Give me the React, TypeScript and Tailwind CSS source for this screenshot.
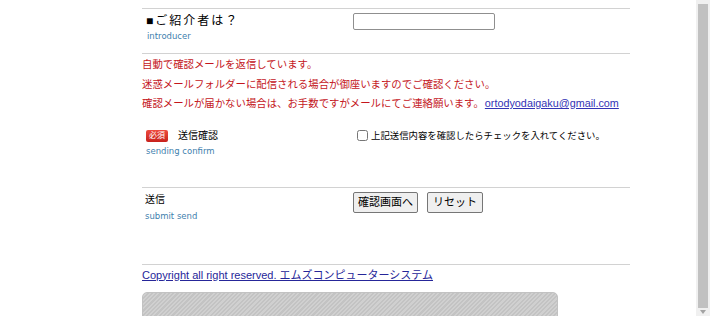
import React from 'react';

const jp = "font-['Liberation_Sans','Noto_Sans_CJK_JP',sans-serif]";
const sub = "font-['DejaVu_Sans',sans-serif] text-[8.5px] text-[#3f7fae] leading-none";

const Rule: React.FC = () => <div className="h-px w-full bg-[#d2d2d2]" />;

const App: React.FC = () => {
    return (
        <div className={`flex h-[316px] w-[710px] overflow-hidden bg-white text-black ${jp}`}>
            {/* ページ本体 */}
            <div className="flex-1 pt-[8px] pl-[142px]">
                <div className="w-[488px]">
                    <Rule />

                    {/* 紹介者 */}
                    <div className="flex h-[44px]">
                        <div className="w-[211px] pl-[4px] pt-[3px]">
                            <div className="text-[12px] leading-[18px] tracking-[2px]">■ご紹介者は？</div>
                            <div className={`${sub} mt-[2px] pl-[1px]`}>introducer</div>
                        </div>
                        <div className="pt-[4px]">
                            <input
                                type="text"
                                className="block h-[17px] w-[142px] rounded-[2px] border border-[#8f8f8f] bg-white"
                            />
                        </div>
                    </div>

                    <Rule />

                    {/* 注意書き */}
                    <div className="whitespace-nowrap pt-[1px] text-[10.4px] leading-[19.5px] text-[#c4161c]">
                        <p>自動で確認メールを返信しています。</p>
                        <p>迷惑メールフォルダーに配信される場合が御座いますのでご確認ください。</p>
                        <p>
                            確認メールが届かない場合は、お手数ですがメールにてご連絡願います。
                            <a href="#" className="ml-[1px] text-[10.8px] text-[#3333b5] underline">
                                ortodyodaigaku@gmail.com
                            </a>
                        </p>
                    </div>

                    {/* 送信確認 */}
                    <div className="mt-[15px] flex h-[58px]">
                        <div className="w-[211px] pl-[4px]">
                            <div className="flex items-center">
                                <span className="flex h-[12px] w-[22px] items-center justify-center rounded-[2px] bg-gradient-to-b from-[#ee4a3f] to-[#c7201b] text-[8px] leading-none text-white">
                                    必須
                                </span>
                                <span className="ml-[10px] text-[10px] leading-[14px]">送信確認</span>
                            </div>
                            <div className={`${sub} mt-[4px]`}>sending confirm</div>
                        </div>
                        <label className="flex h-[14px] items-center">
                            <input type="checkbox" className="m-0 ml-[4px] h-[11px] w-[11px]" />
                            <span className="ml-[3px] text-[9.4px] leading-none">
                                上記送信内容を確認したらチェックを入れてください。
                            </span>
                        </label>
                    </div>

                    <Rule />

                    {/* 送信 */}
                    <div className="flex h-[76px]">
                        <div className="w-[211px] pl-[3px] pt-[5px]">
                            <div className="text-[10px] leading-[14px]">送信</div>
                            <div className={`${sub} mt-[5px]`}>submit send</div>
                        </div>
                        <div className="flex gap-[9px] pt-[4px]">
                            <button className="h-[21px] rounded-[2px] border border-[#767676] bg-[#efefef] px-[4px] text-[11px] leading-none">
                                確認画面へ
                            </button>
                            <button className="h-[21px] rounded-[2px] border border-[#767676] bg-[#efefef] px-[5px] text-[11px] leading-none">
                                リセット
                            </button>
                        </div>
                    </div>

                    <Rule />

                    {/* フッター */}
                    <div className="pt-[3px] text-[11px] leading-[14px]">
                        <a href="#" className="text-[#262699] underline">
                            Copyright all right reserved. エムズコンピューターシステム
                        </a>
                    </div>
                    <div className="mt-[10px] h-[30px] w-[416px] rounded-[5px] border border-[#c2c2c2] bg-[repeating-linear-gradient(135deg,#c3c3c3_0px,#c3c3c3_1.5px,#d0d0d0_1.5px,#d0d0d0_3px)]" />
                </div>
            </div>

            {/* スクロールバー */}
            <div className="flex w-[14px] flex-col bg-[#f0f0f0] px-[2px]">
                <div className="mt-[4px] flex-1 bg-[#c1c1c1]" />
                <div className="flex h-[8px] items-center justify-center">
                    <svg width="6" height="4" viewBox="0 0 6 4">
                        <path d="M0 0 L6 0 L3 4 Z" fill="#a3a3a3" />
                    </svg>
                </div>
            </div>
        </div>
    );
};

export default App;
